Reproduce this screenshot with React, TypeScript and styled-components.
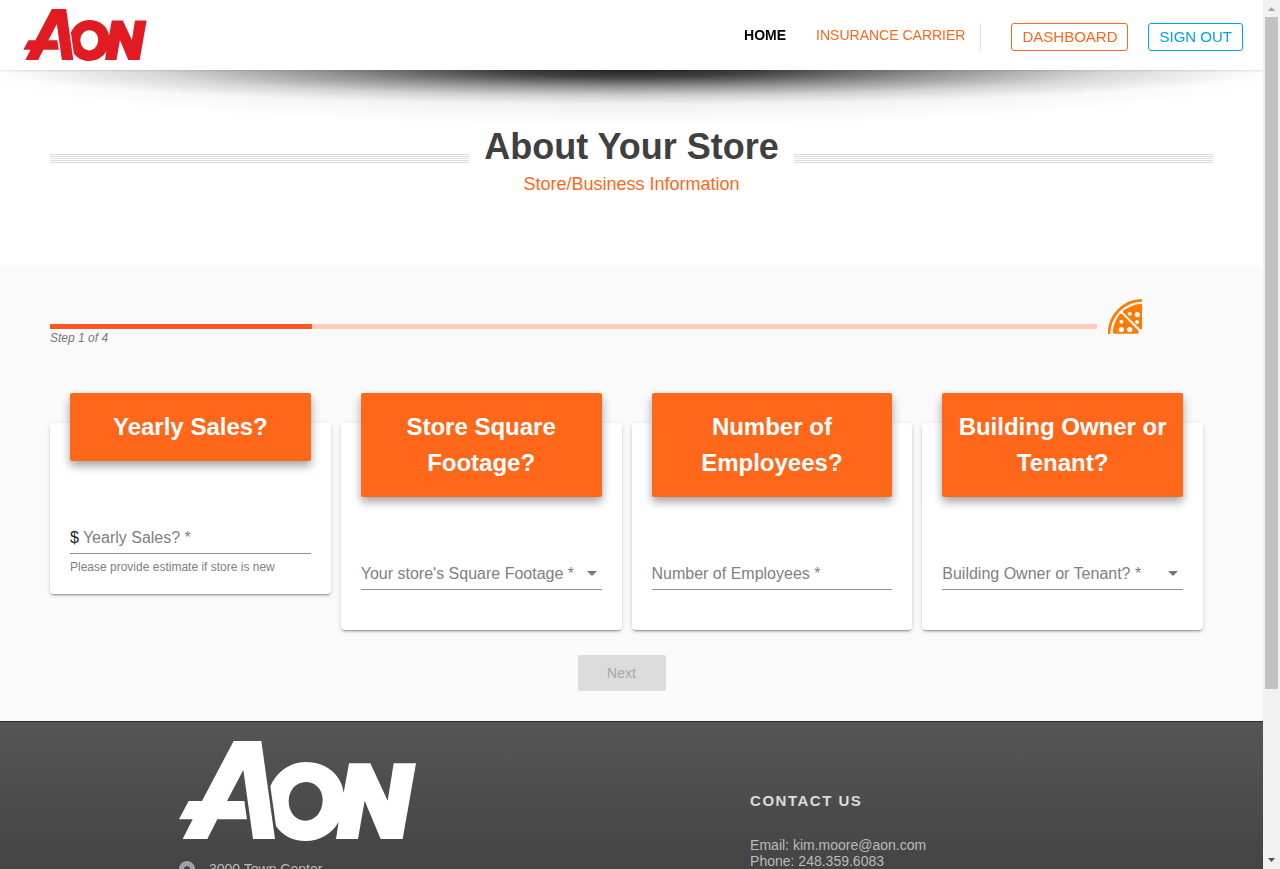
import React from "react";
import styled, { createGlobalStyle } from "styled-components";

const ORANGE = "#ff671b";
const BLUE = "#00a3e8";

const GlobalStyle = createGlobalStyle`
  *, *::before, *::after { box-sizing: border-box; }
  body {
    margin: 0;
    background: #fff;
    font-family: "Liberation Sans", Arial, Helvetica, sans-serif;
    font-size: 14px;
    color: #222;
  }
  button, input, select { font-family: inherit; }
`;

const Shell = styled.div`
  display: grid;
  grid-template-columns: minmax(0, 1fr) 17px;
  height: 100vh;
`;

const Page = styled.div`
  display: flex;
  flex-direction: column;
  overflow-x: hidden;
  overflow-y: auto;
  scrollbar-width: none;
`;

/* Scroll rail */
const Rail = styled.div`
  display: flex;
  flex-direction: column;
  align-items: center;
  background: #f1f1f1;
`;

const RailArrow = styled.svg`
  flex: none;
  width: 17px;
  height: 17px;
`;

const Thumb = styled.div`
  flex: 672;
  width: 13px;
  background: #c1c1c1;
`;

const RailRest = styled.div`
  flex: 163;
`;

/* Header */
const Header = styled.header`
  display: flex;
  flex: none;
  align-items: center;
  justify-content: space-between;
  position: sticky;
  top: 0;
  z-index: 1;
  height: 70px;
  padding: 0 20px 0 23px;
  background: #fff;
  box-shadow: 0 1px 2px rgba(0, 0, 0, 0.12);
`;

const LogoSvg = styled.svg<{ $width: number; $height: number }>`
  display: block;
  flex: none;
  width: ${(p) => p.$width}px;
  height: ${(p) => p.$height}px;
`;

const Nav = styled.nav`
  display: flex;
  align-items: center;
  height: 28px;
  margin-top: 4px;
`;

const NavLink = styled.a<{ $active?: boolean }>`
  margin-right: ${(p) => (p.$active ? 30 : 15)}px;
  padding-bottom: 4px;
  line-height: 24px;
  color: ${(p) => (p.$active ? "#000" : ORANGE)};
  font-weight: ${(p) => (p.$active ? 700 : 400)};
  text-decoration: none;
`;

const NavDivider = styled.span`
  width: 1px;
  height: 28px;
  margin-right: 30px;
  background: #e2e2e2;
`;

const OutlineButton = styled.button<{ $color: string }>`
  height: 28px;
  padding: 0 10px;
  border: 1px solid ${(p) => p.$color};
  border-radius: 3px;
  background: #fff;
  color: ${(p) => p.$color};
  font-size: 15px;
  line-height: 26px;
  cursor: pointer;
  & + & {
    margin-left: 20px;
  }
`;

/* Title band */
const Hero = styled.section`
  flex: none;
  height: 195px;
  padding: 53px 50px 0;
  background:
    radial-gradient(ellipse 50% 34px at 50% 0, rgba(0, 0, 0, 0.84) 0%, rgba(0, 0, 0, 0.72) 20%, rgba(0, 0, 0, 0.36) 50%, rgba(0, 0, 0, 0.12) 75%, rgba(0, 0, 0, 0) 100%),
    radial-gradient(ellipse 52% 56px at 50% 0, rgba(0, 0, 0, 0.12) 0%, rgba(0, 0, 0, 0.07) 50%, rgba(0, 0, 0, 0) 100%),
    #fff;
  text-align: center;
`;

const TitleRow = styled.div`
  display: flex;
  align-items: center;
`;

const Stripes = styled.span`
  flex: 1;
  height: 9px;
  margin-top: 22px;
  background: repeating-linear-gradient(to bottom, #dcdcdc 0, #dcdcdc 1px, transparent 1px, transparent 2px);
`;

const Title = styled.h1`
  margin: 0;
  padding: 0 15px;
  color: #404040;
  font-size: 36px;
  font-weight: 700;
  line-height: 48px;
`;

const Subtitle = styled.p`
  margin: 2px 0 0;
  color: ${ORANGE};
  font-size: 18px;
  line-height: 22px;
`;

/* Form */
const FormSection = styled.form`
  flex: none;
  padding: 34px 50px 30px;
  background: #fafafa;
`;

const ProgressRow = styled.div`
  display: grid;
  grid-template-columns: 90% auto;
  align-items: start;
  column-gap: 11px;
`;

const ProgressColumn = styled.div`
  padding-top: 25px;
`;

const Track = styled.div`
  height: 5px;
  background: #ffccbc;
`;

const Fill = styled.div`
  height: 5px;
  background: #ff5722;
`;

const Step = styled.div`
  color: #777;
  font-size: 12px;
  font-style: italic;
  line-height: 18px;
`;

const PizzaSvg = styled.svg`
  display: block;
  width: 34px;
  height: 35px;
`;

const Cards = styled.div`
  display: grid;
  grid-template-columns: repeat(4, minmax(0, 1fr));
  align-items: start;
  gap: 10px;
  margin-top: 76px;
  padding-right: 10px;
`;

const Card = styled.div`
  padding: 0 20px;
  border-radius: 4px;
  background: #fff;
  box-shadow:
    0 3px 1px -2px rgba(0, 0, 0, 0.2),
    0 2px 2px 0 rgba(0, 0, 0, 0.14),
    0 1px 5px 0 rgba(0, 0, 0, 0.12);
`;

const CardLabel = styled.label`
  display: block;
  margin-top: -30px;
  padding: 16px 10px;
  border-radius: 2px;
  background: ${ORANGE};
  box-shadow: 0 5px 10px rgba(0, 0, 0, 0.36);
  color: #fff;
  font-size: 24px;
  font-weight: 700;
  line-height: 36px;
  text-align: center;
`;

const Field = styled.div`
  display: flex;
  align-items: center;
  height: 33px;
  margin-top: 60px;
  border-bottom: 1px solid #949494;
`;

const Prefix = styled.span`
  margin-right: 4px;
  padding-top: 2px;
  font-size: 16px;
  line-height: 30px;
`;

const TextInput = styled.input`
  flex: 1;
  min-width: 0;
  height: 32px;
  padding: 2px 0 0;
  border: 0;
  outline: 0;
  background: transparent;
  color: #222;
  font-size: 16px;
  &::placeholder {
    color: #808080;
    opacity: 1;
  }
`;

const SelectInput = styled.select`
  flex: 1;
  min-width: 0;
  height: 32px;
  padding: 0;
  border: 0;
  outline: 0;
  appearance: none;
  background: transparent;
  color: #808080;
  font-size: 16px;
`;

const Caret = styled.svg`
  flex: none;
  width: 10px;
  height: 5px;
  margin-right: 5px;
`;

const Hint = styled.div`
  height: 40px;
  padding-top: 4px;
  color: #808080;
  font-size: 12px;
  line-height: 18px;
`;

const Actions = styled.div`
  display: flex;
  justify-content: center;
  margin-top: 25px;
  padding-right: 20px;
`;

const NextButton = styled.button`
  width: 88px;
  height: 36px;
  border: 0;
  border-radius: 2px;
  background: #dcdcdc;
  color: #a6a6a6;
  font-size: 14px;
`;

/* Footer */
const Footer = styled.footer`
  display: grid;
  flex: 1 0 auto;
  grid-template-columns: 5fr 4fr;
  padding: 19px 56px 0 179px;
  border-top: 1px solid #2b2b2b;
  background: linear-gradient(to bottom, #555 0, #444 150px);
  color: #bbb;
  line-height: 16px;
`;

const Address = styled.div`
  display: flex;
  align-items: flex-start;
  gap: 14px;
  margin-top: 20px;
`;

const PinSvg = styled.svg`
  width: 16px;
  height: 22px;
`;

const FooterTitle = styled.h2`
  margin: 51px 0 27px;
  color: #ddd;
  font-size: 15px;
  font-weight: 700;
  letter-spacing: 0.1em;
  line-height: 18px;
`;

function Logo({ width, height, color }: { width: number; height: number; color: string }) {
  return (
    <LogoSvg $width={width} $height={height} viewBox="57 93 711 300" role="img" aria-label="Aon">
      <path
        fill={color}
        d="M221 93H304L345 387H279L250 180L201 273H253L261 328H172L142 387H68L98 328H57L86 273H126Z"
      />
      <path
        fill={color}
        fillRule="evenodd"
        d="M331 229C350 186 390 156 437 156C499 156 545 195 551 248L567 160H631L683 272L701 160H768L728 387H662L614 272L594 387H528L536 335C517 370 480 393 436 393C398 393 366 376 348 348ZM437 216C408 216 386 241 386 274C386 308 408 332 436 332C465 332 488 306 488 269C488 238 466 216 437 216Z"
      />
    </LogoSvg>
  );
}

function Pizza() {
  return (
    <PizzaSvg viewBox="0 0 102 105" aria-hidden="true">
      <path d="M3 105C3 50 48 4 102 4" fill="none" stroke="#ff7a05" strokeWidth="8" />
      <path
        fill="#ff7a05"
        fillRule="evenodd"
        d="M14 99C16 78 24 60 35 46Q39 42 43 46L92 96Q93 104 87 104H18Q14 103 14 99ZM40 62a6 6 0 1 0 .1 0ZM40 84a8 8 0 1 0 .1 0ZM65 84a8 8 0 1 0 .1 0Z"
      />
      <path
        fill="#ff7a05"
        fillRule="evenodd"
        d="M47 34C63 23 81 16 98 14Q102 14 102 18V91H97L46 41Q43 38 47 34ZM65 38a6 6 0 1 0 .1 0ZM88 39a8 8 0 1 0 .1 0ZM87 63a6 6 0 1 0 .1 0Z"
      />
    </PizzaSvg>
  );
}

type Question = {
  id: string;
  title: string;
  placeholder: string;
  kind: "text" | "select";
  prefix?: string;
  hint?: string;
};

const questions: Question[] = [
  {
    id: "sales",
    title: "Yearly Sales?",
    placeholder: "Yearly Sales? *",
    kind: "text",
    prefix: "$",
    hint: "Please provide estimate if store is new",
  },
  { id: "footage", title: "Store Square Footage?", placeholder: "Your store's Square Footage *", kind: "select" },
  { id: "employees", title: "Number of Employees?", placeholder: "Number of Employees *", kind: "text" },
  { id: "tenancy", title: "Building Owner or Tenant?", placeholder: "Building Owner or Tenant? *", kind: "select" },
];

function QuestionCard({ question }: { question: Question }) {
  const { id, title, placeholder, kind, prefix, hint } = question;
  return (
    <Card>
      <CardLabel htmlFor={id}>{title}</CardLabel>
      <Field>
        {prefix && <Prefix>{prefix}</Prefix>}
        {kind === "text" ? (
          <TextInput id={id} type="text" placeholder={placeholder} />
        ) : (
          <>
            <SelectInput id={id} defaultValue="">
              <option value="">{placeholder}</option>
            </SelectInput>
            <Caret viewBox="0 0 10 5" aria-hidden="true">
              <path d="M0 0H10L5 5Z" fill="#757575" />
            </Caret>
          </>
        )}
      </Field>
      <Hint>{hint}</Hint>
    </Card>
  );
}

export default function App() {
  const step = 1;
  const steps = 4;
  return (
    <>
      <GlobalStyle />
      <Shell>
        <Page>
          <Header>
            <Logo width={124} height={52} color="#e11b22" />
            <Nav>
              <NavLink href="#home" $active>
                HOME
              </NavLink>
              <NavLink href="#carrier">INSURANCE CARRIER</NavLink>
              <NavDivider />
              <OutlineButton type="button" $color={ORANGE}>
                DASHBOARD
              </OutlineButton>
              <OutlineButton type="button" $color={BLUE}>
                SIGN OUT
              </OutlineButton>
            </Nav>
          </Header>

          <Hero>
            <TitleRow>
              <Stripes />
              <Title>About Your Store</Title>
              <Stripes />
            </TitleRow>
            <Subtitle>Store/Business Information</Subtitle>
          </Hero>

          <FormSection>
            <ProgressRow>
              <ProgressColumn>
                <Track>
                  <Fill style={{ width: `${(step / steps) * 100}%` }} />
                </Track>
                <Step>
                  Step {step} of {steps}
                </Step>
              </ProgressColumn>
              <Pizza />
            </ProgressRow>
            <Cards>
              {questions.map((q) => (
                <QuestionCard key={q.id} question={q} />
              ))}
            </Cards>
            <Actions>
              <NextButton type="submit" disabled>
                Next
              </NextButton>
            </Actions>
          </FormSection>

          <Footer>
            <div>
              <Logo width={237} height={100} color="#fff" />
              <Address>
                <PinSvg viewBox="0 0 16 22" aria-hidden="true">
                  <path
                    fill="#a0a2a6"
                    fillRule="evenodd"
                    d="M8 0a8 8 0 0 1 8 8c0 5-5 10-8 14C5 18 0 13 0 8a8 8 0 0 1 8-8ZM8 5a3 3 0 1 0 .1 0Z"
                  />
                </PinSvg>
                <span>3000 Town Center</span>
              </Address>
            </div>
            <div>
              <FooterTitle>CONTACT US</FooterTitle>
              <div>Email: kim.moore@aon.com</div>
              <div>Phone: 248.359.6083</div>
            </div>
          </Footer>
        </Page>

        <Rail aria-hidden="true">
          <RailArrow viewBox="0 0 17 17">
            <path d="M5 11H12L8.500 7Z" fill="#a3a3a3" />
          </RailArrow>
          <Thumb />
          <RailRest />
          <RailArrow viewBox="0 0 17 17">
            <path d="M5 6H12L8.500 10Z" fill="#505050" />
          </RailArrow>
        </Rail>
      </Shell>
    </>
  );
}
